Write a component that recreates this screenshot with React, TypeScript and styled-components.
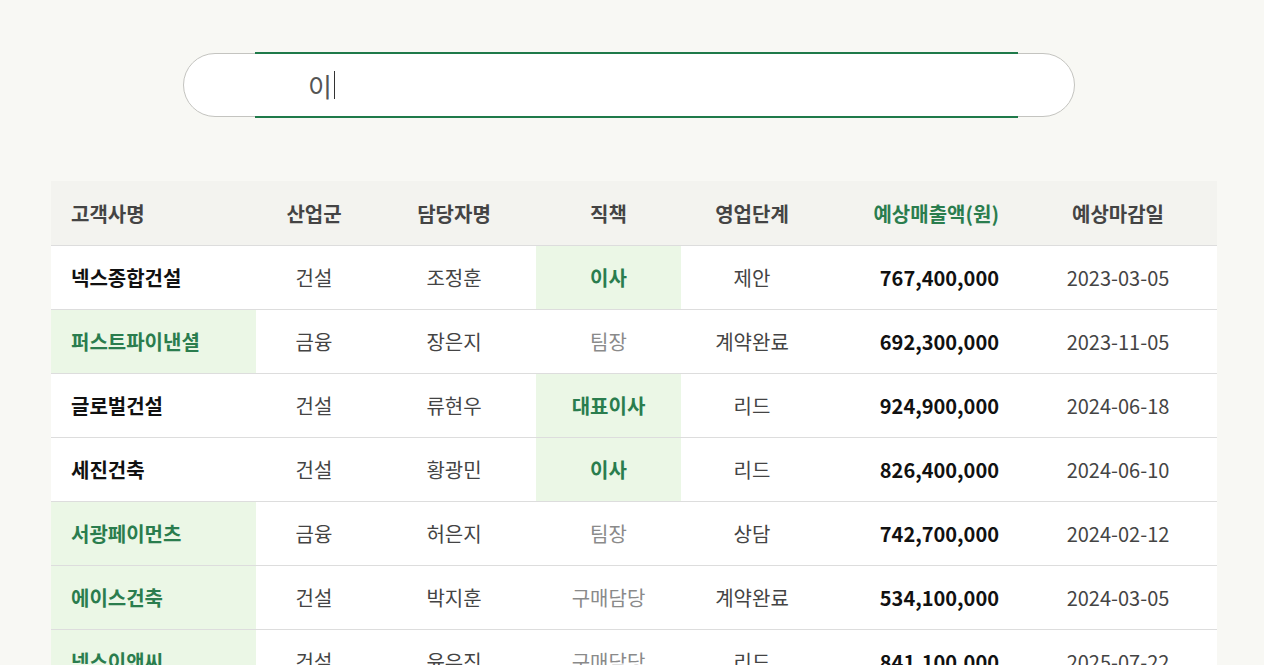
import React from "react";
import styled, { createGlobalStyle } from "styled-components";

const Global = createGlobalStyle`
  body { margin:0; background:#f8f8f4; font-family:"Noto Sans CJK KR","Noto Sans",sans-serif; }
`;
const Page = styled.div`padding-top:53px;`;
const SearchWrap = styled.div`
  margin-left:183px; width:892px; height:64px; box-sizing:border-box; border:1px solid #c4c4c0;
  border-radius:32px; background:#fff; display:flex; padding-left:71px;
`;
const SearchInput = styled.div`
  width:763px; margin-top:-2px; height:66px; box-sizing:border-box; border-top:2px solid #1f7a4a;
  border-bottom:2px solid #1f7a4a; padding-left:53px; display:flex; align-items:center;
  font-size:26px; color:#555;
`;
const Caret = styled.span`display:inline-block;width:1.5px;height:28px;background:#333;margin-left:2px;`;
const Table = styled.table`
  margin:64px 0 0 51px; width:1166px; border-collapse:collapse; table-layout:fixed; font-size:20px;
`;
const Th = styled.th<{ $align?: string; $green?: boolean }>`
  height:64px; background:#f3f3ef; color:${p => (p.$green ? "#2a7d4e" : "#444")};
  font-weight:700; text-align:${p => p.$align || "center"}; padding:0 20px; border-bottom:1px solid #ddd;
`;
const Td = styled.td<{ $align?: string; $hl?: boolean; $tone?: string; $bold?: boolean }>`
  height:63px; background:${p => (p.$hl ? "#ebf7e6" : "#fff")};
  color:${p => (p.$tone === "green" ? "#2a7d4e" : p.$tone === "muted" ? "#8a8a8a" : p.$tone === "black" ? "#111" : "#444")};
  font-weight:${p => (p.$bold ? 700 : 400)}; text-align:${p => p.$align || "center"};
  padding:0 20px; border-bottom:1px solid #ddd; white-space:nowrap;
`;
const rows = [
  ["넥스종합건설", false, "건설", "조정훈", "이사", "제안", "767,400,000", "2023-03-05"],
  ["퍼스트파이낸셜", true, "금융", "장은지", "팀장", "계약완료", "692,300,000", "2023-11-05"],
  ["글로벌건설", false, "건설", "류현우", "대표이사", "리드", "924,900,000", "2024-06-18"],
  ["세진건축", false, "건설", "황광민", "이사", "리드", "826,400,000", "2024-06-10"],
  ["서광페이먼츠", true, "금융", "허은지", "팀장", "상담", "742,700,000", "2024-02-12"],
  ["에이스건축", true, "건설", "박지훈", "구매담당", "계약완료", "534,100,000", "2024-03-05"],
  ["넥스이앤씨", true, "건설", "윤유진", "구매담당", "리드", "841,100,000", "2025-07-22"],
] as const;
const hlRole = (r: string) => r === "이사" || r === "대표이사";

export default function App() {
  return (
    <Page>
      <Global />
      <SearchWrap><SearchInput>이<Caret /></SearchInput></SearchWrap>
      <Table>
        <colgroup>
          <col style={{ width: 205 }} /><col style={{ width: 116 }} /><col style={{ width: 164 }} />
          <col style={{ width: 145 }} /><col style={{ width: 142 }} /><col style={{ width: 196 }} /><col style={{ width: 198 }} />
        </colgroup>
        <thead><tr>
          <Th $align="left">고객사명</Th><Th>산업군</Th><Th>담당자명</Th><Th>직책</Th><Th>영업단계</Th>
          <Th $align="right" $green>예상매출액(원)</Th><Th>예상마감일</Th>
        </tr></thead>
        <tbody>
          {rows.map(r => (
            <tr key={r[0]}>
              <Td $align="left" $bold $hl={r[1]} $tone={r[1] ? "green" : "black"}>{r[0]}</Td>
              <Td>{r[2]}</Td><Td>{r[3]}</Td>
              <Td $hl={hlRole(r[4])} $bold={hlRole(r[4])} $tone={hlRole(r[4]) ? "green" : "muted"}>{r[4]}</Td>
              <Td>{r[5]}</Td>
              <Td $align="right" $bold $tone="black">{r[6]}</Td>
              <Td>{r[7]}</Td>
            </tr>
          ))}
        </tbody>
      </Table>
    </Page>
  );
}
